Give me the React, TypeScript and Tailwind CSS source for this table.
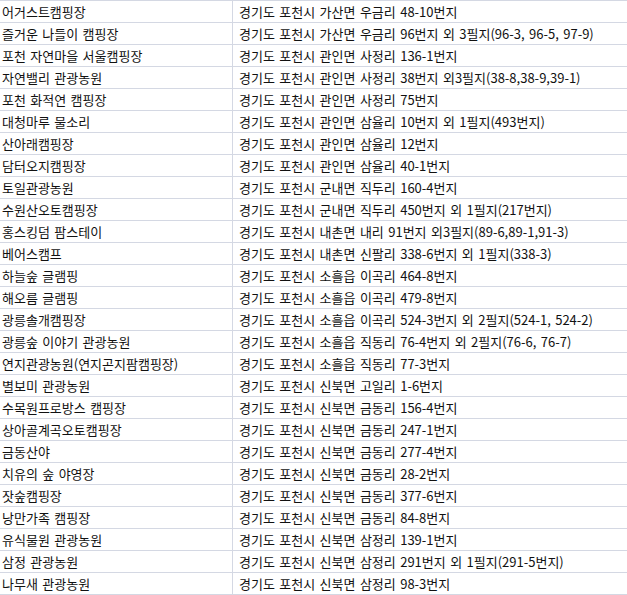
import React from 'react';

const rows: [string, string][] = [
  ['어거스트캠핑장', '경기도 포천시 가산면 우금리 48-10번지'],
  ['즐거운 나들이 캠핑장', '경기도 포천시 가산면 우금리 96번지 외 3필지(96-3, 96-5, 97-9)'],
  ['포천 자연마을 서울캠핑장', '경기도 포천시 관인면 사정리 136-1번지'],
  ['자연밸리 관광농원', '경기도 포천시 관인면 사정리 38번지 외3필지(38-8,38-9,39-1)'],
  ['포천 화적연 캠핑장', '경기도 포천시 관인면 사정리 75번지'],
  ['대청마루 물소리', '경기도 포천시 관인면 삼율리 10번지 외 1필지(493번지)'],
  ['산아래캠핑장', '경기도 포천시 관인면 삼율리 12번지'],
  ['담터오지캠핑장', '경기도 포천시 관인면 삼율리 40-1번지'],
  ['토일관광농원', '경기도 포천시 군내면 직두리 160-4번지'],
  ['수원산오토캠핑장', '경기도 포천시 군내면 직두리 450번지 외 1필지(217번지)'],
  ['홍스킹덤 팜스테이', '경기도 포천시 내촌면 내리 91번지 외3필지(89-6,89-1,91-3)'],
  ['베어스캠프', '경기도 포천시 내촌면 신팔리 338-6번지 외 1필지(338-3)'],
  ['하늘숲 글램핑', '경기도 포천시 소흘읍 이곡리 464-8번지'],
  ['해오름 글램핑', '경기도 포천시 소흘읍 이곡리 479-8번지'],
  ['광릉솔개캠핑장', '경기도 포천시 소흘읍 이곡리 524-3번지 외 2필지(524-1, 524-2)'],
  ['광릉숲 이야기 관광농원', '경기도 포천시 소흘읍 직동리 76-4번지 외 2필지(76-6, 76-7)'],
  ['연지관광농원(연지곤지팜캠핑장)', '경기도 포천시 소흘읍 직동리 77-3번지'],
  ['별보미 관광농원', '경기도 포천시 신북면 고일리 1-6번지'],
  ['수목원프로방스 캠핑장', '경기도 포천시 신북면 금동리 156-4번지'],
  ['상아골계곡오토캠핑장', '경기도 포천시 신북면 금동리 247-1번지'],
  ['금동산야', '경기도 포천시 신북면 금동리 277-4번지'],
  ['치유의 숲 야영장', '경기도 포천시 신북면 금동리 28-2번지'],
  ['잣숲캠핑장', '경기도 포천시 신북면 금동리 377-6번지'],
  ['낭만가족 캠핑장', '경기도 포천시 신북면 금동리 84-8번지'],
  ['유식물원 관광농원', '경기도 포천시 신북면 삼정리 139-1번지'],
  ['삼정 관광농원', '경기도 포천시 신북면 삼정리 291번지 외 1필지(291-5번지)'],
  ['나무새 관광농원', '경기도 포천시 신북면 삼정리 98-3번지'],
];

const App: React.FC = () => {
  return (
    <div
      className="w-[627px] bg-white text-[13px] text-[#111] border-t border-[#d4d8e3] [word-spacing:1.5px]"
      style={{ fontFamily: '"Noto Sans CJK KR", "Noto Sans", sans-serif' }}
    >
      {rows.map(([name, addr]) => (
        <div key={name} className="grid grid-cols-[233px_1fr] h-[22px] border-b border-[#d4d8e3]">
          <div className="flex items-center pl-[2px] border-r border-[#d4d8e3] whitespace-nowrap overflow-hidden">
            {name}
          </div>
          <div className="flex items-center pl-[6px] whitespace-nowrap overflow-hidden">{addr}</div>
        </div>
      ))}
    </div>
  );
};

export default App;
